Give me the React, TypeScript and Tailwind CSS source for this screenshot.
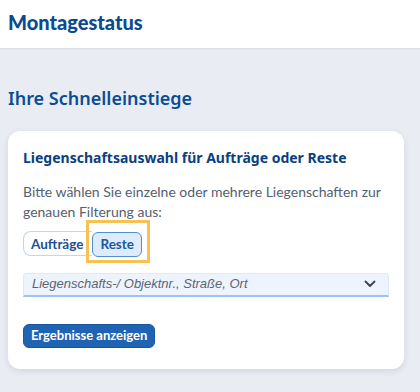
import React from 'react';

const App: React.FC = () => {
  return (
    <div className="min-h-[392px] w-full bg-[#eaecf4] font-['Noto_Sans',sans-serif]">
      {/* Header */}
      <header className="h-12 bg-white px-2 pt-[8px] shadow-[0_1px_2px_rgba(0,0,0,0.08)]">
        <h1 className="font-['Lato',sans-serif] text-[20px] font-black leading-7 text-[#0b4a91]">Montagestatus</h1>
      </header>

      <main className="px-2 pt-[38px]">
        <h2 className="text-[18px] font-semibold leading-6 text-[#0b4d94]">Ihre Schnelleinstiege</h2>

        {/* Card */}
        <section className="mt-[21px] w-[396px] rounded-xl bg-white px-[15px] pb-[21px] pt-[17px] shadow-[0_2px_6px_rgba(30,40,80,0.12)]">
          <h3 className="text-[14px] font-bold leading-5 text-[#0a3f80]">
            Liegenschaftsauswahl für Aufträge oder Reste
          </h3>
          <p className="mt-[14px] font-['Lato',sans-serif] text-[14px] leading-[20px] text-[#556070]">
            Bitte wählen Sie einzelne oder mehrere Liegenschaften zur genauen Filterung aus:
          </p>

          <div className="mt-[9px] flex items-center font-['Lato',sans-serif]">
            <button className="h-[25px] rounded-l-lg border border-r-0 border-[#bcd6f3] pl-[7px] pr-[9px] text-[13.5px] font-bold text-[#20508f]">
              Aufträge
            </button>
            <div className="relative">
              <button className="h-[25px] rounded-md border border-[#4f8fd2] bg-[#dcecfd] px-[7px] text-[13.5px] font-bold text-[#1d5699]">
                Reste
              </button>
              <div className="pointer-events-none absolute -left-[6px] -top-[11px] h-[43px] w-[64px] border-[3px] border-[#f8c253]" />
            </div>
          </div>

          <div className="mt-[16px] flex h-6 w-[366px] items-center justify-between rounded-t-[4px] border border-b-2 border-[#dce9fb] border-b-[#9cc3f0] bg-[#eef4fd] pl-2 pr-3">
            <span className="font-['Liberation_Sans',sans-serif] text-[13px] italic text-[#5b6470]">
              Liegenschafts-/ Objektnr., Straße, Ort
            </span>
            <svg width="12" height="8" viewBox="0 0 12 8" fill="none">
              <path d="M1.5 1.5 6 6l4.5-4.5" stroke="#3a4454" strokeWidth="1.8" strokeLinecap="round" strokeLinejoin="round" />
            </svg>
          </div>

          <button className="mt-[27px] h-6 rounded-md border border-[#1a55a0] bg-[#1f63b5] px-[7px] font-['Lato',sans-serif] text-[13px] font-bold text-white">
            Ergebnisse anzeigen
          </button>
        </section>
      </main>
    </div>
  );
};

export default App;
